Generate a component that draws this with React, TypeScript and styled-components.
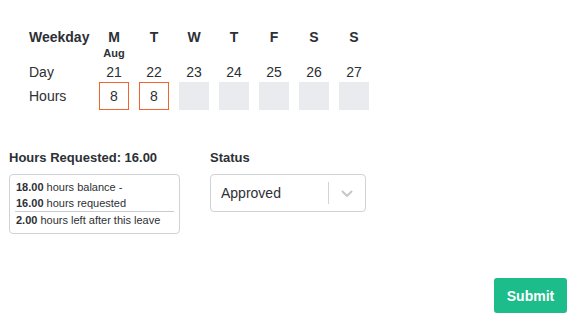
import styled, { createGlobalStyle } from "styled-components";

const GlobalStyle = createGlobalStyle`
  body {
    margin: 0;
    font-family: "Liberation Sans", Arial, sans-serif;
    color: #2d3035;
    background: #fff;
  }
`;

const days = [
  { weekday: "M", month: "Aug", day: 21, hours: "8" },
  { weekday: "T", day: 22, hours: "8" },
  { weekday: "W", day: 23 },
  { weekday: "T", day: 24 },
  { weekday: "F", day: 25 },
  { weekday: "S", day: 26 },
  { weekday: "S", day: 27 },
];

const App = () => {
  return (
    <>
      <GlobalStyle />
      <Page>
        <Schedule>
          <RowLabel $bold $height={17}>Weekday</RowLabel>
          {days.map((d, i) => (
            <HeadCell key={`w${i}`} $height={17}>{d.weekday}</HeadCell>
          ))}

          <RowLabel $height={16} />
          {days.map((d, i) => (
            <MonthCell key={`m${i}`}>{d.month ?? ""}</MonthCell>
          ))}

          <RowLabel $height={21}>Day</RowLabel>
          {days.map((d, i) => (
            <DayCell key={`d${i}`}>{d.day}</DayCell>
          ))}

          <RowLabel $height={28}>Hours</RowLabel>
          {days.map((d, i) => (
            <DayCell key={`h${i}`}>
              <HourBox $filled={!!d.hours}>{d.hours ?? ""}</HourBox>
            </DayCell>
          ))}
        </Schedule>

        <Details>
          <Field $width={171}>
            <FieldLabel>Hours Requested: 16.00</FieldLabel>
            <SummaryBox>
              <SummaryLine>
                <b>18.00</b> hours balance -
              </SummaryLine>
              <SummaryLine $divider>
                <b>16.00</b> hours requested
              </SummaryLine>
              <SummaryLine>
                <b>2.00</b> hours left after this leave
              </SummaryLine>
            </SummaryBox>
          </Field>

          <Field $width={156}>
            <FieldLabel>Status</FieldLabel>
            <Select>
              <SelectValue>Approved</SelectValue>
              <Separator />
              <Indicator>
                <svg width="12" height="8" viewBox="0 0 12 8">
                  <path
                    d="M1.5 1.5 L6 6 L10.5 1.5"
                    fill="none"
                    stroke="#c8c8c8"
                    strokeWidth="2"
                    strokeLinecap="round"
                    strokeLinejoin="round"
                  />
                </svg>
              </Indicator>
            </Select>
          </Field>
        </Details>

        <Footer>
          <SubmitButton>Submit</SubmitButton>
        </Footer>
      </Page>
    </>
  );
};

export default App;

const Page = styled.div`
  display: flex;
  flex-direction: column;
  padding: 28px 10px 0 9px;
  width: 577px;
  height: 330px;
  box-sizing: border-box;
`;

const Schedule = styled.div`
  display: grid;
  grid-template-columns: 65px repeat(7, 40px);
  margin-left: 20px;
  font-size: 14px;
`;

const RowLabel = styled.div<{ $bold?: boolean; $height: number }>`
  display: flex;
  align-items: center;
  height: ${(p) => p.$height}px;
  font-weight: ${(p) => (p.$bold ? 700 : 400)};
`;

const HeadCell = styled.div<{ $height: number }>`
  display: flex;
  align-items: center;
  justify-content: center;
  height: ${(p) => p.$height}px;
  font-weight: 700;
`;

const MonthCell = styled.div`
  display: flex;
  align-items: center;
  justify-content: center;
  height: 16px;
  font-size: 11px;
  font-weight: 700;
`;

const DayCell = styled.div`
  display: flex;
  align-items: center;
  justify-content: center;
`;

const HourBox = styled.div<{ $filled: boolean }>`
  display: flex;
  align-items: center;
  justify-content: center;
  width: 30px;
  height: 28px;
  box-sizing: border-box;
  font-size: 14px;
  background: ${(p) => (p.$filled ? "#fff" : "#e9ebee")};
  border: ${(p) => (p.$filled ? "1px solid #ef6530" : "none")};
`;

const Details = styled.div`
  display: flex;
  gap: 30px;
  margin-top: 40px;
`;

const Field = styled.div<{ $width: number }>`
  display: flex;
  flex-direction: column;
  width: ${(p) => p.$width}px;
`;

const FieldLabel = styled.div`
  font-size: 13px;
  font-weight: 700;
  line-height: 16px;
  margin-bottom: 8px;
`;

const SummaryBox = styled.div`
  border: 1px solid #cfd2d6;
  border-radius: 4px;
  padding: 4px 5px 5px;
  font-size: 11px;
`;

const SummaryLine = styled.div<{ $divider?: boolean }>`
  line-height: 16px;
  padding-left: 1px;
  white-space: nowrap;
  border-bottom: ${(p) => (p.$divider ? "1px solid #c8cbcf" : "none")};

  b {
    font-weight: 700;
  }
`;

const Select = styled.div`
  display: flex;
  align-items: center;
  height: 38px;
  box-sizing: border-box;
  border: 1px solid #cfd2d6;
  border-radius: 4px;
`;

const SelectValue = styled.div`
  flex: 1;
  padding-left: 10px;
  font-size: 14px;
`;

const Separator = styled.div`
  width: 1px;
  height: 22px;
  background: #d2d4d7;
`;

const Indicator = styled.div`
  display: flex;
  align-items: center;
  justify-content: center;
  width: 36px;
  padding-top: 1px;
`;

const Footer = styled.div`
  display: flex;
  justify-content: flex-end;
  margin-top: 44px;
`;

const SubmitButton = styled.button`
  width: 73px;
  height: 35px;
  border: none;
  border-radius: 3px;
  background: #1cbc8b;
  color: #fff;
  font-family: "Liberation Sans", Arial, sans-serif;
  font-size: 14px;
  font-weight: 700;
  cursor: pointer;
`;
